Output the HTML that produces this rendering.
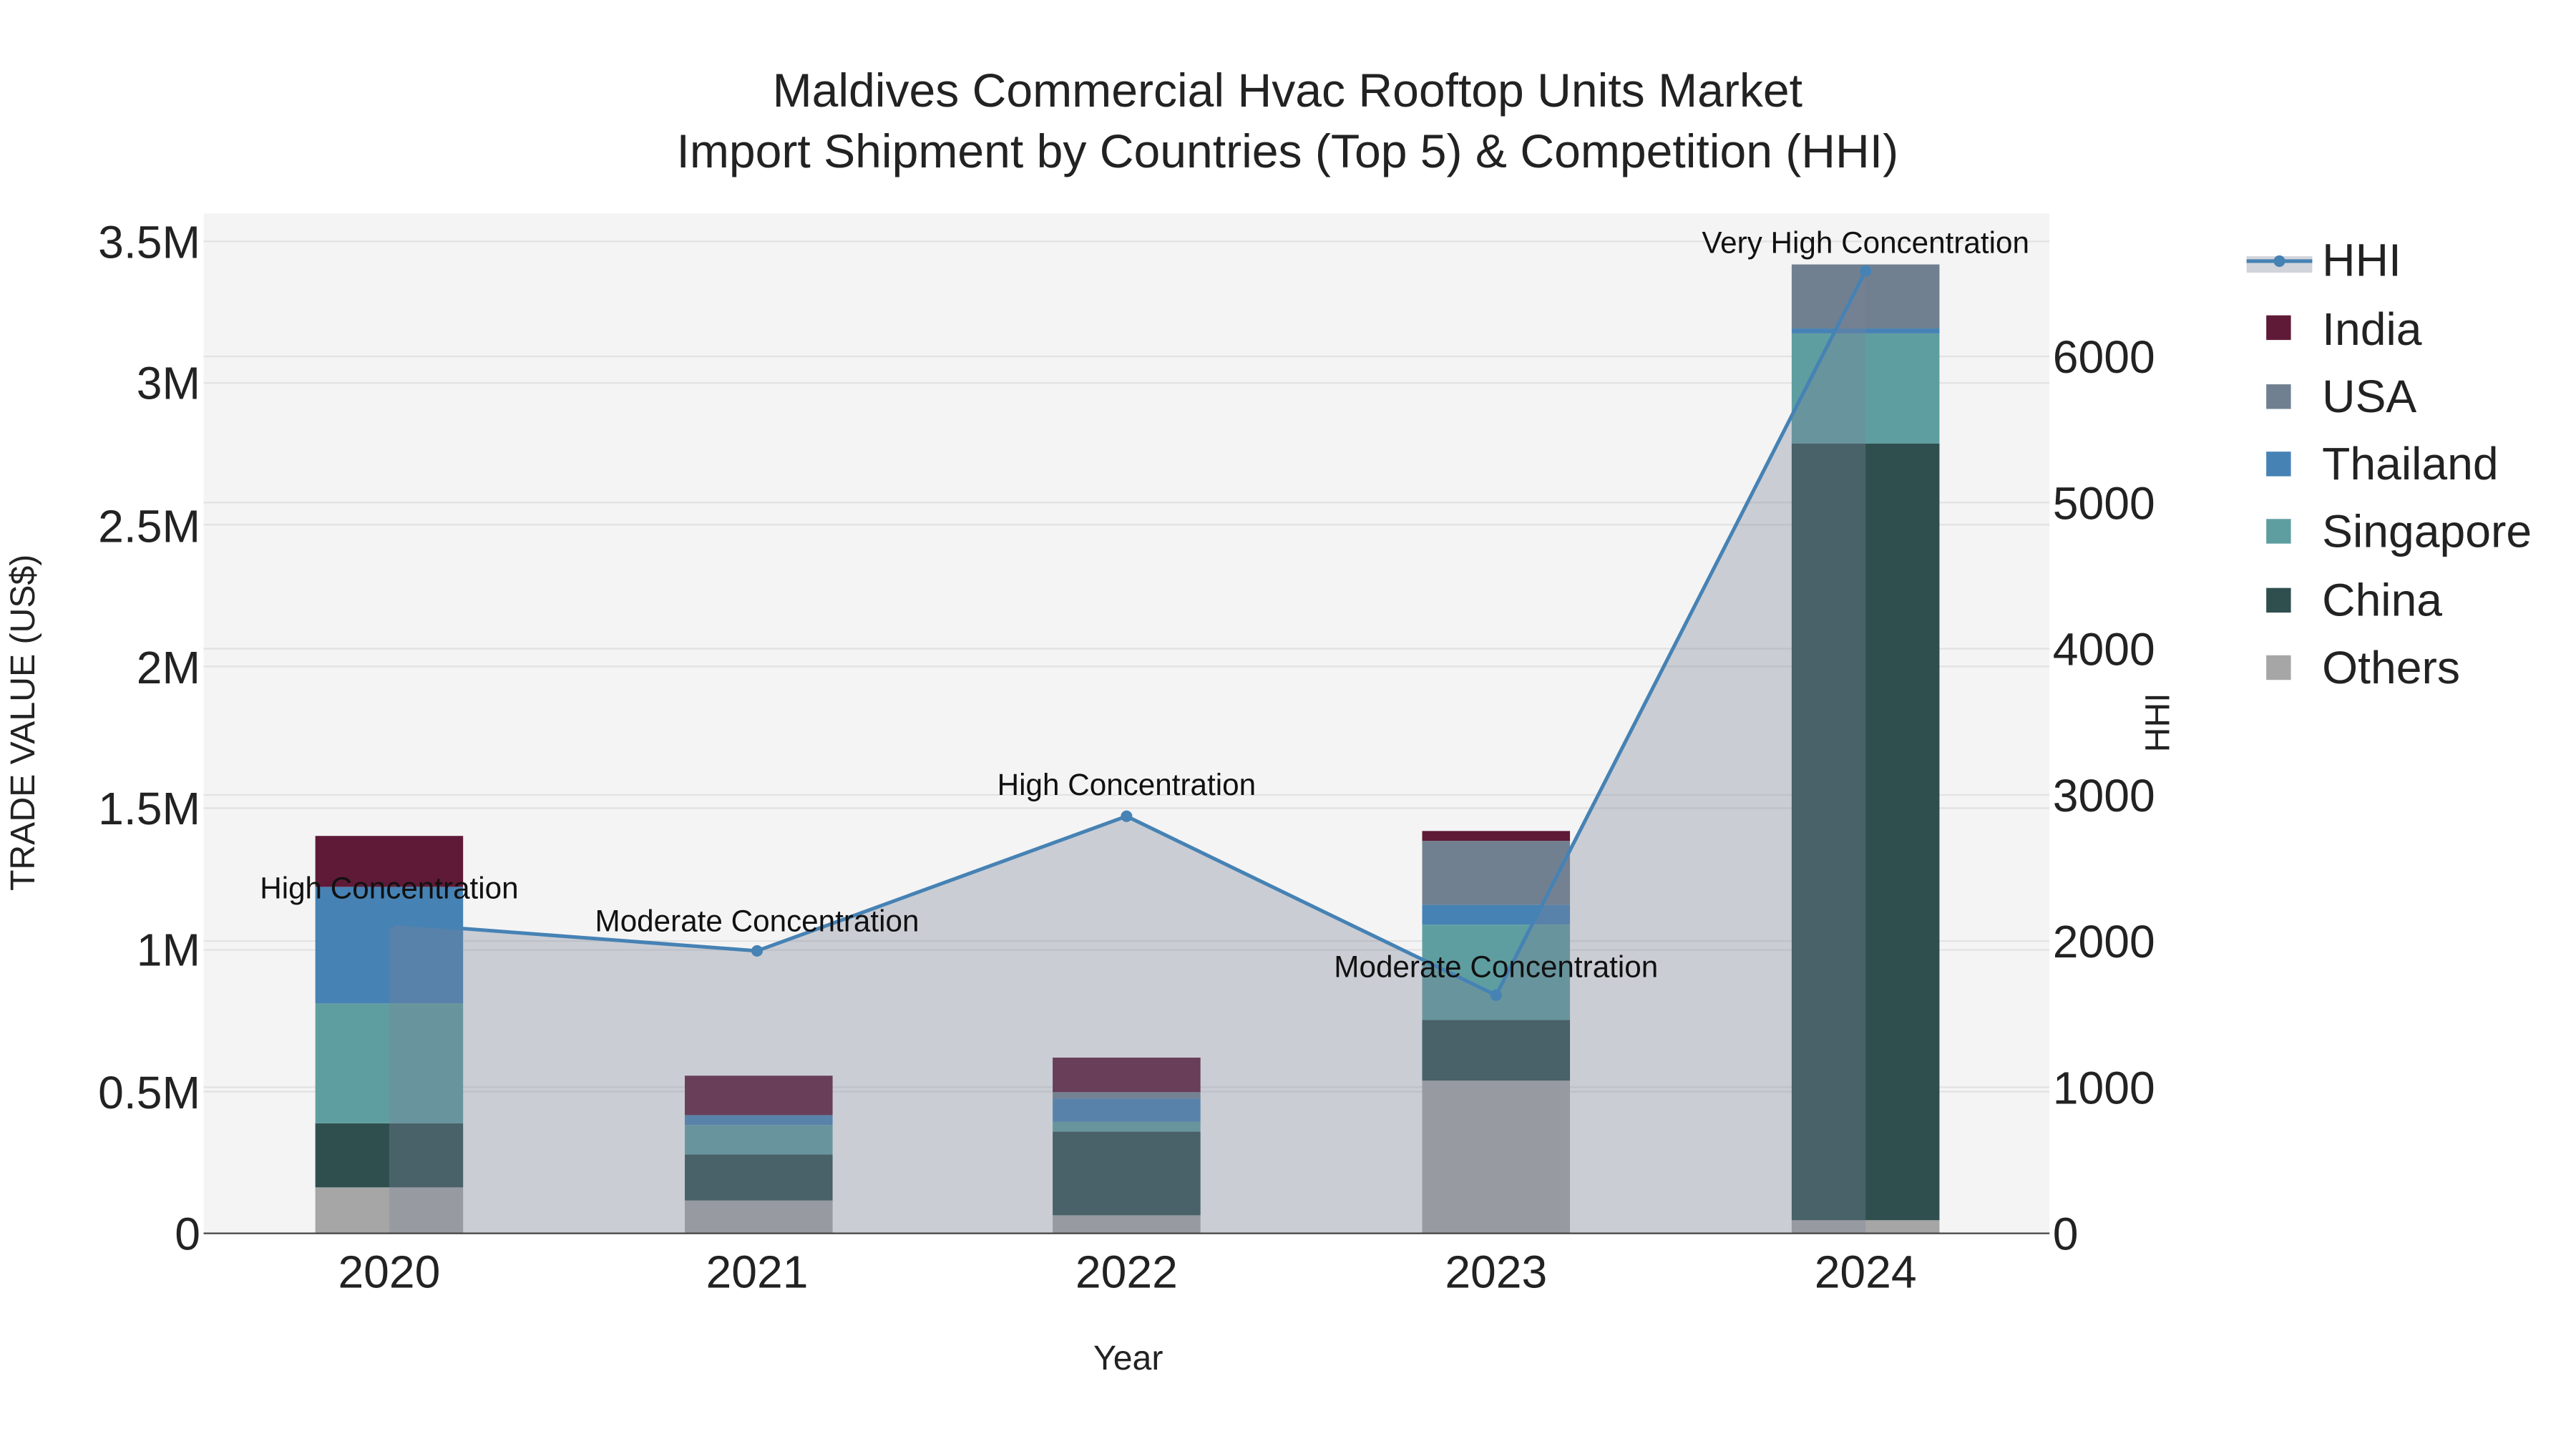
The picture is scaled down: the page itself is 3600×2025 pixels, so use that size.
<!DOCTYPE html>
<html><head><meta charset="utf-8"><style>html,body{margin:0;padding:0;background:#fff}svg{display:block}</style></head><body>
<svg width="3600" height="2025" viewBox="0 0 1568.6 882.3" xmlns="http://www.w3.org/2000/svg" font-family="Liberation Sans, sans-serif">
<rect x="0" y="0" width="1568.6" height="882.3" fill="#fff"/>
<rect x="124" y="130" width="1124" height="621" fill="#f4f4f4"/>
<g stroke="#e2e2e2" stroke-width="1">
<line x1="124" x2="1248" y1="664.7" y2="664.7"/><line x1="124" x2="1248" y1="578.4" y2="578.4"/><line x1="124" x2="1248" y1="492.1" y2="492.1"/><line x1="124" x2="1248" y1="405.8" y2="405.8"/><line x1="124" x2="1248" y1="319.5" y2="319.5"/><line x1="124" x2="1248" y1="233.2" y2="233.2"/><line x1="124" x2="1248" y1="147" y2="147"/>
<line x1="124" x2="1248" y1="662" y2="662"/><line x1="124" x2="1248" y1="573" y2="573"/><line x1="124" x2="1248" y1="484" y2="484"/><line x1="124" x2="1248" y1="395" y2="395"/><line x1="124" x2="1248" y1="306" y2="306"/><line x1="124" x2="1248" y1="217" y2="217"/>
</g>
<g>
<rect x="192" y="723" width="90" height="28" fill="#a6a6a6"/>
<rect x="192" y="684" width="90" height="39" fill="#2f4f4f"/>
<rect x="192" y="611" width="90" height="73" fill="#5f9ea0"/>
<rect x="192" y="540" width="90" height="71" fill="#4682b4"/>
<rect x="192" y="509" width="90" height="31" fill="#5f1a37"/>
<rect x="417" y="731" width="90" height="20" fill="#a6a6a6"/>
<rect x="417" y="703" width="90" height="28" fill="#2f4f4f"/>
<rect x="417" y="685" width="90" height="18" fill="#5f9ea0"/>
<rect x="417" y="679" width="90" height="6" fill="#4682b4"/>
<rect x="417" y="655" width="90" height="24" fill="#5f1a37"/>
<rect x="641" y="740" width="90" height="11" fill="#a6a6a6"/>
<rect x="641" y="689" width="90" height="51" fill="#2f4f4f"/>
<rect x="641" y="683" width="90" height="6" fill="#5f9ea0"/>
<rect x="641" y="669" width="90" height="14" fill="#4682b4"/>
<rect x="641" y="665" width="90" height="4" fill="#708090"/>
<rect x="641" y="644" width="90" height="21" fill="#5f1a37"/>
<rect x="866" y="658" width="90" height="93" fill="#a6a6a6"/>
<rect x="866" y="621" width="90" height="37" fill="#2f4f4f"/>
<rect x="866" y="563" width="90" height="58" fill="#5f9ea0"/>
<rect x="866" y="551" width="90" height="12" fill="#4682b4"/>
<rect x="866" y="512" width="90" height="39" fill="#708090"/>
<rect x="866" y="506" width="90" height="6" fill="#5f1a37"/>
<rect x="1091" y="743" width="90" height="8" fill="#a6a6a6"/>
<rect x="1091" y="270" width="90" height="473" fill="#2f4f4f"/>
<rect x="1091" y="203" width="90" height="67" fill="#5f9ea0"/>
<rect x="1091" y="200" width="90" height="3" fill="#4682b4"/>
<rect x="1091" y="161" width="90" height="39" fill="#708090"/>
</g>
<polygon points="237,751 237,562 461,579 686,497 911,606 1136,165 1136,751" fill="rgb(123,133,152)" fill-opacity="0.35"/>
<polyline points="237,562 461,579 686,497 911,606 1136,165" fill="none" stroke="#4682b4" stroke-width="2.2"/>
<g fill="#4682b4"><circle cx="237" cy="562" r="3.5"/><circle cx="461" cy="579" r="3.5"/><circle cx="686" cy="497" r="3.5"/><circle cx="911" cy="606" r="3.5"/><circle cx="1136" cy="165" r="3.5"/></g>
<line x1="124" x2="1248" y1="751" y2="751" stroke="#444" stroke-width="1"/>
<g font-size="18.4" fill="#111" text-anchor="middle">
<text x="237" y="547">High Concentration</text>
<text x="461" y="567">Moderate Concentration</text>
<text x="686" y="484">High Concentration</text>
<text x="911" y="595">Moderate Concentration</text>
<text x="1136" y="154">Very High Concentration</text>
</g>
<g font-size="28" fill="#222" text-anchor="end">
<text x="122" y="761">0</text><text x="122" y="675">0.5M</text><text x="122" y="588">1M</text><text x="122" y="502">1.5M</text><text x="122" y="416">2M</text><text x="122" y="330">2.5M</text><text x="122" y="243">3M</text><text x="122" y="157">3.5M</text>
</g>
<g font-size="28" fill="#222" text-anchor="start">
<text x="1250" y="761">0</text><text x="1250" y="672">1000</text><text x="1250" y="583">2000</text><text x="1250" y="494">3000</text><text x="1250" y="405">4000</text><text x="1250" y="316">5000</text><text x="1250" y="227">6000</text>
</g>
<g font-size="28" fill="#222" text-anchor="middle">
<text x="237" y="784">2020</text><text x="461" y="784">2021</text><text x="686" y="784">2022</text><text x="911" y="784">2023</text><text x="1136" y="784">2024</text>
</g>
<text x="687" y="834" font-size="21" fill="#222" text-anchor="middle">Year</text>
<text transform="translate(21,440) rotate(-90)" font-size="21" fill="#222" text-anchor="middle">TRADE VALUE (US$)</text>
<text transform="translate(1321,440) rotate(-90)" font-size="21" fill="#222" text-anchor="middle">HHI</text>
<g font-size="28.8" fill="#222" text-anchor="middle">
<text x="784" y="65">Maldives Commercial Hvac Rooftop Units Market</text>
<text x="784" y="102">Import Shipment by Countries (Top 5) &amp; Competition (HHI)</text>
</g>
<rect x="1368" y="156" width="40" height="10" fill="rgb(123,133,152)" fill-opacity="0.35"/>
<line x1="1368" x2="1408" y1="159" y2="159" stroke="#4682b4" stroke-width="2.2"/>
<circle cx="1388" cy="159" r="3.5" fill="#4682b4"/>
<rect x="1380" y="192" width="15" height="15" fill="#5f1a37"/>
<rect x="1380" y="234" width="15" height="15" fill="#708090"/>
<rect x="1380" y="275" width="15" height="15" fill="#4682b4"/>
<rect x="1380" y="316" width="15" height="15" fill="#5f9ea0"/>
<rect x="1380" y="358" width="15" height="15" fill="#2f4f4f"/>
<rect x="1380" y="399" width="15" height="15" fill="#a6a6a6"/>
<g font-size="28" fill="#222">
<text x="1414" y="168">HHI</text><text x="1414" y="210">India</text><text x="1414" y="251">USA</text><text x="1414" y="292">Thailand</text><text x="1414" y="333">Singapore</text><text x="1414" y="375">China</text><text x="1414" y="416">Others</text>
</g>
</svg>
</body></html>
